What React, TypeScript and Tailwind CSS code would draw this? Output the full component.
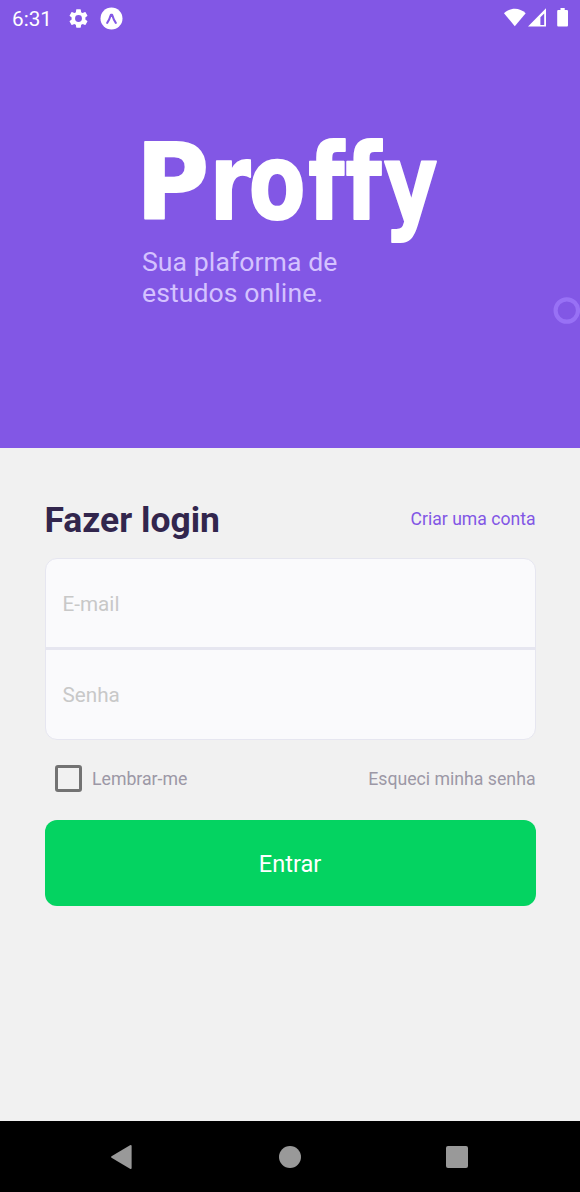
function StatusBar() {
  return (
    <div className="flex h-9 items-center justify-between pl-3 pr-[10px] text-white">
      <div className="flex items-center">
        <span className="w-[55px] pt-px text-[20.7px] leading-9">6:31</span>
        <svg className="size-[23px]" viewBox="0 0 24 24" fill="currentColor">
          <path d="M19.14 12.94c.04-.3.06-.61.06-.94s-.02-.64-.07-.94l2.03-1.58c.18-.14.23-.41.12-.61l-1.92-3.32c-.12-.22-.37-.29-.59-.22l-2.39.96c-.5-.38-1.03-.7-1.62-.94l-.36-2.54A.484.484 0 0 0 13.92 2.4h-3.84c-.24 0-.43.17-.47.41l-.36 2.54c-.59.24-1.13.57-1.62.94l-2.39-.96c-.22-.08-.47 0-.59.22L2.74 8.87c-.12.21-.08.47.12.61l2.03 1.58c-.05.3-.09.63-.09.94s.02.64.07.94l-2.03 1.58c-.18.14-.23.41-.12.61l1.92 3.32c.12.22.37.29.59.22l2.39-.96c.5.38 1.03.7 1.62.94l.36 2.54c.05.24.24.41.48.41h3.84c.24 0 .44-.17.47-.41l.36-2.54c.59-.24 1.13-.56 1.62-.94l2.39.96c.22.08.47 0 .59-.22l1.92-3.32c.12-.22.07-.47-.12-.61zM12 15.6a3.6 3.6 0 1 1 0-7.2 3.6 3.6 0 0 1 0 7.2z" />
        </svg>
        <svg className="ml-[10px] size-[23px]" viewBox="0 0 23 23">
          <circle cx="11.5" cy="11.5" r="11" fill="white" />
          <path d="M7.2 15.8C8.7 13.8 10 10.8 10.9 7.8h1.2c.9 3 2.2 6 3.7 8" fill="none" stroke="#8257e5" strokeWidth="2.1" strokeLinecap="round" strokeLinejoin="round" />
        </svg>
      </div>
      <svg className="h-6 w-[68px]" viewBox="0 0 68 24" fill="currentColor">
        <path d="M2 7.3C8.2 1.3 17.5 1.3 23.7 7.3L12.8 20.3z" />
        <path fillRule="evenodd" d="M26 20.5 44 2.3v18.2zM38.4 11.2v7.8h3.8v-11.6z" />
        <path d="M58.5 2h4.2v2h2c.8 0 1.3.5 1.3 1.3v14c0 .8-.5 1.3-1.3 1.3h-8.2c-.8 0-1.3-.5-1.3-1.3v-14c0-.8.5-1.3 1.3-1.3h2z" />
      </svg>
    </div>
  );
}

function Hero() {
  return (
    <header className="relative h-[448px] overflow-hidden bg-[#8257e5]">
      <StatusBar />
      <div className="ml-[142px] mt-[94px] w-[300px]">
        <svg
          className="block h-[116px] w-[300px] overflow-visible font-['DejaVu_Sans'] font-bold"
          viewBox="0 0 300 116"
          role="img"
          aria-label="Proffy"
          fill="white"
          stroke="white"
          strokeWidth="2"
          strokeLinejoin="round"
          fontSize="106"
        >
          <text transform="scale(.94 1)" x="-6.5" y="89">P</text>
          <text transform="scale(.78 1)" x="87 137 213 261 310" y="89">roffy</text>
        </svg>
        <p className="text-[26.6px] leading-[31px] tracking-[0.08px] text-[#d4c2ff]">
          Sua plaforma de
          <br />
          estudos online.
        </p>
      </div>
      <svg className="absolute left-[553px] top-[297px] size-[27px]" viewBox="0 0 27 27">
        <circle cx="13.8" cy="13.5" r="11.2" fill="none" stroke="#9871f5" strokeWidth="4.2" />
      </svg>
    </header>
  );
}

function LoginForm() {
  return (
    <main className="flex-1 px-[44.5px] pt-[50px]">
      <div className="flex h-[42px] items-center justify-between">
        <h1 className="pt-[3px] text-[35.45px] font-bold text-[#32264d]">Fazer login</h1>
        <a className="text-[17.6px] text-[#8257e5]">Criar uma conta</a>
      </div>
      <div className="mt-[18px] h-[182px] rounded-[12px] border-[1.5px] border-[#e6e6f0] bg-[#fafafc] text-[20.7px] text-[#c8c8c8]">
        <div className="flex h-[91px] items-center border-b-[3px] border-[#e6e6f0] px-[17px] pt-[4px]">E-mail</div>
        <div className="flex h-[89px] items-center px-[17px] pt-[3px]">Senha</div>
      </div>
      <div className="mt-[25px] flex h-[28px] items-center justify-between text-[17.7px] text-[#9c98a6]">
        <label className="flex items-center">
          <span className="mb-[2px] ml-[10px] mr-[10.5px] size-[27px] rounded-[3px] border-[3px] border-[#737373]" />
          Lembrar-me
        </label>
        <a>Esqueci minha senha</a>
      </div>
      <button className="mt-[27px] block h-[86px] w-full rounded-[12px] bg-[#04d361] pt-[4px] text-[23.6px] text-white">
        Entrar
      </button>
    </main>
  );
}

function NavigationBar() {
  return (
    <nav className="flex h-[71px] items-center justify-between bg-black px-[109px]">
      <svg className="size-[26px]" viewBox="0 0 26 26" fill="#999">
        <path d="M2.5 12.3 21 1.2q1.6-.8 1.6.9v21.8q0 1.7-1.6.9L2.5 13.7q-1-.7 0-1.4z" />
      </svg>
      <span className="mr-[2px] size-[22px] rounded-full bg-[#999]" />
      <span className="mr-[3px] size-[22px] rounded-[2px] bg-[#999]" />
    </nav>
  );
}

export default function App() {
  return (
    <div className="flex h-[1192px] w-[580px] flex-col overflow-hidden bg-[#f1f1f1] font-[Roboto,sans-serif]">
      <Hero />
      <LoginForm />
      <NavigationBar />
    </div>
  );
}
